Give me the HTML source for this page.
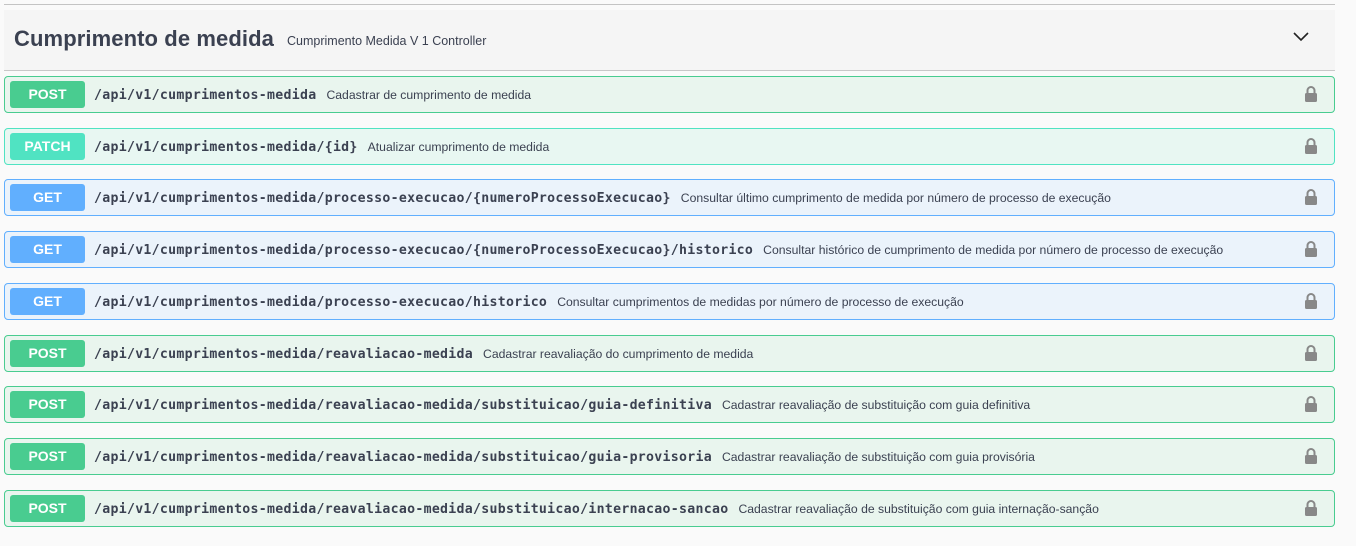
<!DOCTYPE html>
<html><head><meta charset="utf-8"><style>
body{margin:0;background:#fafafa;width:1356px;height:546px;overflow:hidden;font-family:"Liberation Sans",sans-serif;position:relative}
.top{position:absolute;left:4px;top:4px;width:1331px;height:1px;background:#c4c4c4}
.hdr{position:absolute;left:4px;top:10px;width:1331px;height:60px;background:#f5f5f5;border-bottom:1px solid #c8c8c8}
.hdr h3{position:absolute;left:10px;top:16px;margin:0;font-size:22px;font-weight:bold;color:#3b4151;letter-spacing:0.1px}
.hdr small{position:absolute;left:283px;top:24px;font-size:12.5px;color:#3b4151}
.chev{position:absolute;left:1289px;top:22px}
.op{position:absolute;left:4px;width:1329px;height:35px;border:1px solid;border-radius:4px}
.b{position:absolute;left:5px;top:4px;width:75px;height:27px;border-radius:3px;color:#fff;font-weight:bold;font-size:14px;text-align:center;line-height:27px}
.p{position:absolute;left:89px;top:11px;font-family:"DejaVu Sans Mono","Liberation Mono",monospace;font-weight:bold;font-size:13.2px;color:#3b4151;white-space:nowrap;letter-spacing:0.3px}
.d{font-family:"Liberation Sans",sans-serif;font-weight:normal;font-size:12.2px;margin-left:10px;letter-spacing:0}
.lk{position:absolute;left:1298px;top:8px}
.post{background:#e9f5ee;border-color:#49cc90}.post .b{background:#49cc90}
.patch{background:#e8f7f2;border-color:#50e3c2}.patch .b{background:#50e3c2}
.get{background:#ebf3fb;border-color:#61affe}.get .b{background:#61affe}
</style></head><body>
<div class="top"></div>
<div class="hdr"><h3>Cumprimento de medida</h3><small>Cumprimento Medida V 1 Controller</small>
<svg class="chev" width="16" height="10" viewBox="0 0 16 10"><path d="M1 1l7 7 7-7" fill="none" stroke="#222" stroke-width="1.6"/></svg></div>
<div id="ops"></div>
<script>
var L='<svg class="lk" width="16" height="18" viewBox="0 0 16 18"><path d="M4.5 9V5.5a3.5 3.5 0 0 1 7 0V9" fill="none" stroke="#888" stroke-width="2"/><rect x="2" y="8" width="12" height="9" rx="1.5" fill="#888"/></svg>';
var d=[["post","POST","/api/v1/cumprimentos-medida","Cadastrar de cumprimento de medida"],
["patch","PATCH","/api/v1/cumprimentos-medida/{id}","Atualizar cumprimento de medida"],
["get","GET","/api/v1/cumprimentos-medida/processo-execucao/{numeroProcessoExecucao}","Consultar último cumprimento de medida por número de processo de execução"],
["get","GET","/api/v1/cumprimentos-medida/processo-execucao/{numeroProcessoExecucao}/historico","Consultar histórico de cumprimento de medida por número de processo de execução"],
["get","GET","/api/v1/cumprimentos-medida/processo-execucao/historico","Consultar cumprimentos de medidas por número de processo de execução"],
["post","POST","/api/v1/cumprimentos-medida/reavaliacao-medida","Cadastrar reavaliação do cumprimento de medida"],
["post","POST","/api/v1/cumprimentos-medida/reavaliacao-medida/substituicao/guia-definitiva","Cadastrar reavaliação de substituição com guia definitiva"],
["post","POST","/api/v1/cumprimentos-medida/reavaliacao-medida/substituicao/guia-provisoria","Cadastrar reavaliação de substituição com guia provisória"],
["post","POST","/api/v1/cumprimentos-medida/reavaliacao-medida/substituicao/internacao-sancao","Cadastrar reavaliação de substituição com guia internação-sanção"]];
var h='';d.forEach(function(o,i){var t=76+Math.round(i*51.7);
h+='<div class="op '+o[0]+'" style="top:'+t+'px"><div class="b">'+o[1]+'</div><div class="p">'+o[2]+'<span class="d">'+o[3]+'</span></div>'+L+'</div>';});
document.getElementById('ops').innerHTML=h;
</script>
</body></html>
